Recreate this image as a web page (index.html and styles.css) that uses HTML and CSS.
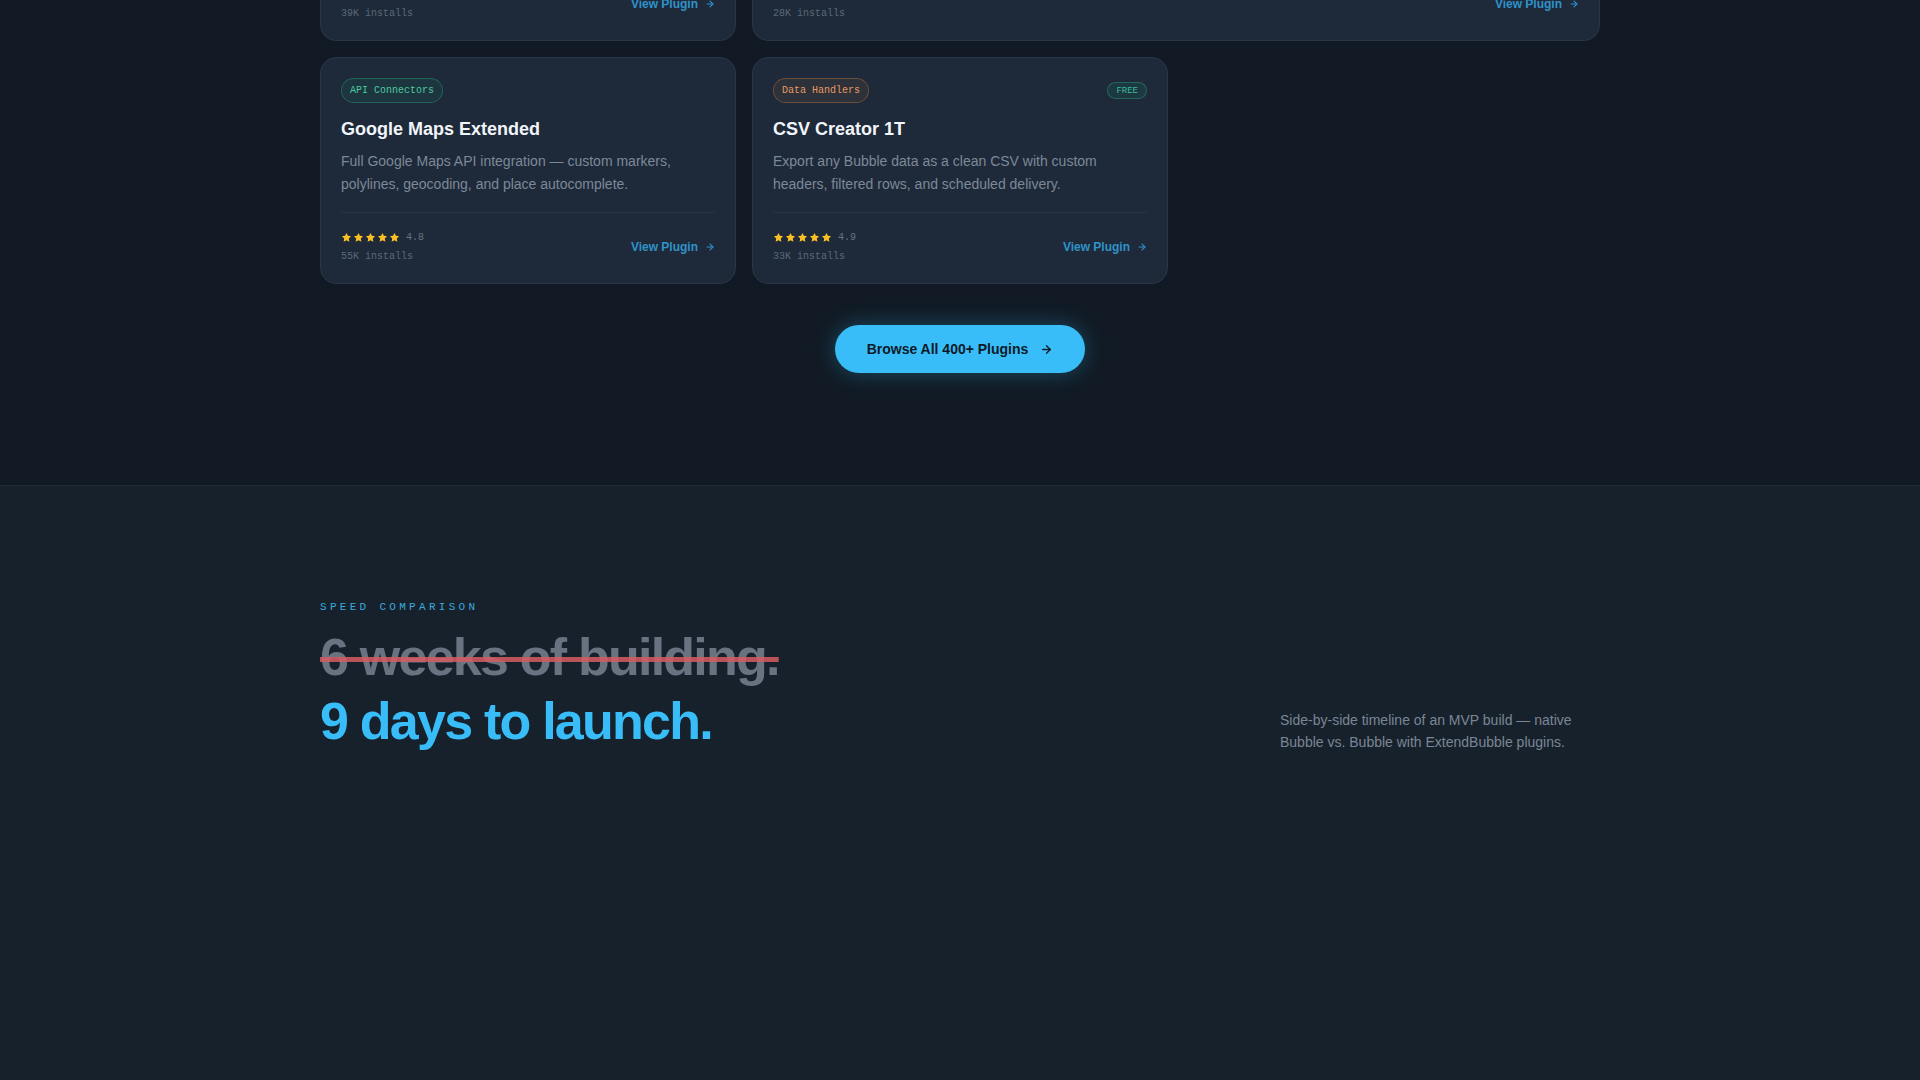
FILE: index.html
```html
<!DOCTYPE html>
<html>
	<head>
		<meta charset="UTF-8">
		<title>ExtendBubble — Plugins</title>
		<link rel="stylesheet" href="styles.css">
	</head>
	<body>
		<section class="plugins">
			<div class="wrap">
				<div class="grid">
					<div class="card">
						<div class="card-head">
							<span class="tag tag-ui">UI Elements</span>
						</div>
						<h3>Rich Text Editor Pro</h3>
						<p class="desc">Drop-in WYSIWYG editor with markdown shortcuts, image uploads, mentions and HTML export.</p>
						<div class="card-foot">
							<div class="meta">
								<div class="rating">
									<span class="stars">
										<svg viewBox="0 0 24 24"><polygon points="12 2 15.09 8.26 22 9.27 17 14.14 18.18 21.02 12 17.77 5.82 21.02 7 14.14 2 9.27 8.91 8.26"/></svg>
										<svg viewBox="0 0 24 24"><polygon points="12 2 15.09 8.26 22 9.27 17 14.14 18.18 21.02 12 17.77 5.82 21.02 7 14.14 2 9.27 8.91 8.26"/></svg>
										<svg viewBox="0 0 24 24"><polygon points="12 2 15.09 8.26 22 9.27 17 14.14 18.18 21.02 12 17.77 5.82 21.02 7 14.14 2 9.27 8.91 8.26"/></svg>
										<svg viewBox="0 0 24 24"><polygon points="12 2 15.09 8.26 22 9.27 17 14.14 18.18 21.02 12 17.77 5.82 21.02 7 14.14 2 9.27 8.91 8.26"/></svg>
										<svg viewBox="0 0 24 24"><polygon points="12 2 15.09 8.26 22 9.27 17 14.14 18.18 21.02 12 17.77 5.82 21.02 7 14.14 2 9.27 8.91 8.26"/></svg>
									</span>
									<span class="score">4.7</span>
								</div>
								<div class="installs">39K installs</div>
							</div>
							<a class="view" href="#">View Plugin
								<svg viewBox="0 0 24 24"><line x1="5" y1="12" x2="19" y2="12"/><polyline points="12 5 19 12 12 19"/></svg>
							</a>
						</div>
					</div>
					<div class="card wide">
						<div class="card-head">
							<span class="tag tag-pay">Payments</span>
						</div>
						<h3>Stripe Checkout Suite</h3>
						<p class="desc">Subscriptions, one-off charges, customer portal and webhooks — all wired to Bubble workflows.</p>
						<div class="card-foot">
							<div class="meta">
								<div class="rating">
									<span class="stars">
										<svg viewBox="0 0 24 24"><polygon points="12 2 15.09 8.26 22 9.27 17 14.14 18.18 21.02 12 17.77 5.82 21.02 7 14.14 2 9.27 8.91 8.26"/></svg>
										<svg viewBox="0 0 24 24"><polygon points="12 2 15.09 8.26 22 9.27 17 14.14 18.18 21.02 12 17.77 5.82 21.02 7 14.14 2 9.27 8.91 8.26"/></svg>
										<svg viewBox="0 0 24 24"><polygon points="12 2 15.09 8.26 22 9.27 17 14.14 18.18 21.02 12 17.77 5.82 21.02 7 14.14 2 9.27 8.91 8.26"/></svg>
										<svg viewBox="0 0 24 24"><polygon points="12 2 15.09 8.26 22 9.27 17 14.14 18.18 21.02 12 17.77 5.82 21.02 7 14.14 2 9.27 8.91 8.26"/></svg>
										<svg viewBox="0 0 24 24"><polygon points="12 2 15.09 8.26 22 9.27 17 14.14 18.18 21.02 12 17.77 5.82 21.02 7 14.14 2 9.27 8.91 8.26"/></svg>
									</span>
									<span class="score">4.9</span>
								</div>
								<div class="installs">28K installs</div>
							</div>
							<a class="view" href="#">View Plugin
								<svg viewBox="0 0 24 24"><line x1="5" y1="12" x2="19" y2="12"/><polyline points="12 5 19 12 12 19"/></svg>
							</a>
						</div>
					</div>

					<div class="card">
						<div class="card-head">
							<span class="tag tag-api">API Connectors</span>
						</div>
						<h3>Google Maps Extended</h3>
						<p class="desc">Full Google Maps API integration — custom markers, polylines, geocoding, and place autocomplete.</p>
						<div class="card-foot">
							<div class="meta">
								<div class="rating">
									<span class="stars">
										<svg viewBox="0 0 24 24"><polygon points="12 2 15.09 8.26 22 9.27 17 14.14 18.18 21.02 12 17.77 5.82 21.02 7 14.14 2 9.27 8.91 8.26"/></svg>
										<svg viewBox="0 0 24 24"><polygon points="12 2 15.09 8.26 22 9.27 17 14.14 18.18 21.02 12 17.77 5.82 21.02 7 14.14 2 9.27 8.91 8.26"/></svg>
										<svg viewBox="0 0 24 24"><polygon points="12 2 15.09 8.26 22 9.27 17 14.14 18.18 21.02 12 17.77 5.82 21.02 7 14.14 2 9.27 8.91 8.26"/></svg>
										<svg viewBox="0 0 24 24"><polygon points="12 2 15.09 8.26 22 9.27 17 14.14 18.18 21.02 12 17.77 5.82 21.02 7 14.14 2 9.27 8.91 8.26"/></svg>
										<svg viewBox="0 0 24 24"><polygon points="12 2 15.09 8.26 22 9.27 17 14.14 18.18 21.02 12 17.77 5.82 21.02 7 14.14 2 9.27 8.91 8.26"/></svg>
									</span>
									<span class="score">4.8</span>
								</div>
								<div class="installs">55K installs</div>
							</div>
							<a class="view" href="#">View Plugin
								<svg viewBox="0 0 24 24"><line x1="5" y1="12" x2="19" y2="12"/><polyline points="12 5 19 12 12 19"/></svg>
							</a>
						</div>
					</div>
					<div class="card">
						<div class="card-head">
							<span class="tag tag-data">Data Handlers</span>
							<span class="free">FREE</span>
						</div>
						<h3>CSV Creator 1T</h3>
						<p class="desc">Export any Bubble data as a clean CSV with custom headers, filtered rows, and scheduled delivery.</p>
						<div class="card-foot">
							<div class="meta">
								<div class="rating">
									<span class="stars">
										<svg viewBox="0 0 24 24"><polygon points="12 2 15.09 8.26 22 9.27 17 14.14 18.18 21.02 12 17.77 5.82 21.02 7 14.14 2 9.27 8.91 8.26"/></svg>
										<svg viewBox="0 0 24 24"><polygon points="12 2 15.09 8.26 22 9.27 17 14.14 18.18 21.02 12 17.77 5.82 21.02 7 14.14 2 9.27 8.91 8.26"/></svg>
										<svg viewBox="0 0 24 24"><polygon points="12 2 15.09 8.26 22 9.27 17 14.14 18.18 21.02 12 17.77 5.82 21.02 7 14.14 2 9.27 8.91 8.26"/></svg>
										<svg viewBox="0 0 24 24"><polygon points="12 2 15.09 8.26 22 9.27 17 14.14 18.18 21.02 12 17.77 5.82 21.02 7 14.14 2 9.27 8.91 8.26"/></svg>
										<svg viewBox="0 0 24 24"><polygon points="12 2 15.09 8.26 22 9.27 17 14.14 18.18 21.02 12 17.77 5.82 21.02 7 14.14 2 9.27 8.91 8.26"/></svg>
									</span>
									<span class="score">4.9</span>
								</div>
								<div class="installs">33K installs</div>
							</div>
							<a class="view" href="#">View Plugin
								<svg viewBox="0 0 24 24"><line x1="5" y1="12" x2="19" y2="12"/><polyline points="12 5 19 12 12 19"/></svg>
							</a>
						</div>
					</div>
				</div>

				<div class="browse">
					<a class="btn" href="#">Browse All 400+ Plugins
						<svg viewBox="0 0 24 24"><line x1="5" y1="12" x2="19" y2="12"/><polyline points="12 5 19 12 12 19"/></svg>
					</a>
				</div>
			</div>
		</section>

		<section class="speed">
			<div class="wrap">
				<div class="speed-head">
					<div>
						<div class="label">Speed Comparison</div>
						<h2>
							<span class="old">6 weeks of building.</span>
							<span class="new">9 days to launch.</span>
						</h2>
					</div>
					<p class="lead">Side-by-side timeline of an MVP build — native Bubble vs. Bubble with ExtendBubble plugins.</p>
				</div>
			</div>
		</section>
	</body>
</html>
```

FILE: styles.css
```css
*{
	box-sizing: border-box;
}
html,body{
	margin: 0;
	padding: 0;
}
body{
	background: #17212c;
	font-family: "Liberation Sans", Arial, sans-serif;
	color: #e2e8f0;
}
a{
	text-decoration: none;
}
.wrap{
	width: 1280px;
	margin: 0 auto;
}

/* plugin grid */
.plugins{
	background: #111a24;
	padding-bottom: 112px;
	border-bottom: 1px solid #1f2a36;
}
.grid{
	display: grid;
	grid-template-columns: repeat(3, 1fr);
	gap: 16px;
	margin-top: -186px;
}
.card{
	display: flex;
	flex-direction: column;
	background: #1e2a3a;
	border: 1px solid #2a3646;
	border-radius: 16px;
	padding: 20px 20px 18px 20px;
}
.card.wide{
	grid-column: span 2;
}
.card-head{
	display: flex;
	justify-content: space-between;
	align-items: center;
	margin-bottom: 14px;
}
.tag{
	display: inline-flex;
	align-items: center;
	height: 25px;
	padding: 0 8px;
	border-radius: 999px;
	font-family: "Liberation Mono", monospace;
	font-size: 10px;
}
.tag-api{
	color: #4cc99e;
	background: rgba(16,185,129,0.08);
	border: 1px solid rgba(52,211,153,0.28);
}
.tag-data{
	color: #e79a62;
	background: rgba(251,146,60,0.07);
	border: 1px solid rgba(251,146,60,0.3);
}
.tag-ui{
	color: #a78bfa;
	background: rgba(139,92,246,0.08);
	border: 1px solid rgba(139,92,246,0.3);
}
.tag-pay{
	color: #60a5fa;
	background: rgba(59,130,246,0.08);
	border: 1px solid rgba(59,130,246,0.3);
}
.free{
	display: inline-flex;
	align-items: center;
	height: 17px;
	padding: 0 8px;
	border-radius: 999px;
	font-family: "Liberation Mono", monospace;
	font-size: 9px;
	color: #3dbb9b;
	background: rgba(16,185,129,0.1);
	border: 1px solid rgba(52,211,153,0.3);
}
.card h3{
	margin: 0 0 9px 0;
	font-size: 18px;
	line-height: 24px;
	font-weight: bold;
	color: #f1f5f9;
}
.desc{
	margin: 0;
	flex: 1;
	font-size: 14px;
	line-height: 23px;
	color: #7d8898;
}
.card-foot{
	display: flex;
	justify-content: space-between;
	align-items: center;
	margin-top: 16px;
	padding-top: 16px;
	border-top: 1px solid #2a3646;
}
.rating{
	display: flex;
	align-items: center;
	gap: 6px;
	height: 16px;
}
.stars{
	display: flex;
	gap: 1px;
}
.stars svg{
	width: 11px;
	height: 11px;
	fill: #fbbf24;
}
.score,.installs{
	font-family: "Liberation Mono", monospace;
	font-size: 10px;
	color: #667384;
}
.installs{
	margin-top: 4px;
	line-height: 16px;
	color: #5b6878;
}
.view{
	display: flex;
	align-items: center;
	gap: 7px;
	font-size: 12px;
	font-weight: bold;
	color: #2f93c9;
}
.view svg{
	width: 10px;
	height: 10px;
	fill: none;
	stroke: #2f93c9;
	stroke-width: 2.6;
	stroke-linecap: round;
	stroke-linejoin: round;
}

/* browse button */
.browse{
	display: flex;
	justify-content: center;
	margin-top: 41px;
}
.btn{
	display: flex;
	align-items: center;
	gap: 12px;
	height: 48px;
	padding: 0 32px;
	border-radius: 24px;
	background: #38bdf8;
	color: #0c1a27;
	font-size: 14px;
	font-weight: bold;
	box-shadow: 0 0 22px rgba(56,189,248,0.3);
}
.btn svg{
	width: 13px;
	height: 13px;
	fill: none;
	stroke: #0c1a27;
	stroke-width: 2.4;
	stroke-linecap: round;
	stroke-linejoin: round;
}

/* speed comparison */
.speed{
	background: #17212c;
	padding: 113px 0 200px 0;
}
.speed-head{
	display: flex;
	justify-content: space-between;
	align-items: flex-end;
}
.label{
	font-family: "Liberation Mono", monospace;
	font-size: 11px;
	line-height: 16px;
	letter-spacing: 0.3em;
	text-transform: uppercase;
	color: #3aa9df;
	margin-bottom: 10px;
}
.speed h2{
	margin: 0;
	font-size: 52px;
	line-height: 64px;
	font-weight: bold;
	letter-spacing: -0.034em;
}
.speed h2 span{
	display: block;
}
.old{
	color: #687280;
	text-decoration: line-through;
	text-decoration-color: rgba(214,92,96,0.85);
	text-decoration-thickness: 5px;
}
.new{
	color: #38bdf8;
}
.lead{
	margin: 0;
	width: 320px;
	font-size: 14px;
	line-height: 22px;
	color: #7b8695;
}
```
